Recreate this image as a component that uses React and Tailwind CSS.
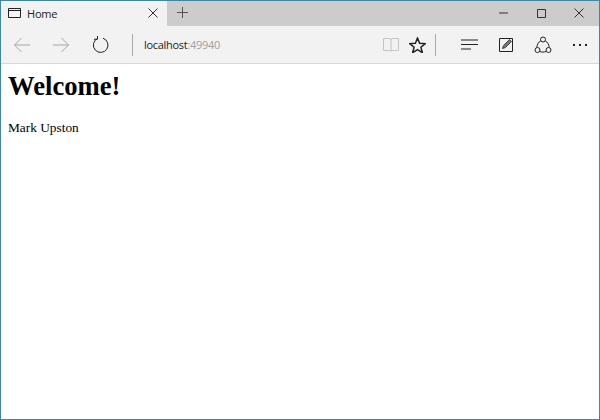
import React from "react";

// Browser chrome icons, drawn to match the Edge toolbar
const Stroke = ({ w = 24, h = 24, className = "", children }) => (
    <svg width={w} height={h} viewBox={`0 0 ${w} ${h}`} fill="none" stroke="currentColor" className={className}>
        {children}
    </svg>
);

const TitleBar = () => (
    <div className="flex h-[25px] items-stretch bg-[#cccccc]">
        <div className="flex w-[166px] items-center bg-[#f2f2f2] pl-[7px]">
            <Stroke w={13} h={10} className="mb-[1px] text-[#222222]">
                <path d="M.5.5h12v9H.5zM.5 2.5h12" />
            </Stroke>
            <span className="mt-[1px] ml-[6px] font-['Open_Sans',sans-serif] text-[11px] tracking-[-0.2px] text-[#222222]">
                Home
            </span>
            <Stroke w={10} h={10} className="mr-[9px] mb-[2px] ml-auto text-[#333333]">
                <path d="M.5.5l9 9M9.500.5l-9 9" />
            </Stroke>
        </div>
        <div className="flex w-[30px] items-center justify-center">
            <Stroke w={11} h={11} className="mb-[2px] text-[#555555]">
                <path d="M5.500 0v11M0 5.500h11" />
            </Stroke>
        </div>
        <div className="ml-auto flex items-center pr-[1px]">
            <div className="flex w-[38px] justify-center">
                <Stroke w={9} h={2} className="mb-[1px] text-[#333333]">
                    <path d="M0 1h9" />
                </Stroke>
            </div>
            <div className="flex w-[38px] justify-center">
                <Stroke w={9} h={9} className="mb-[1px] text-[#333333]">
                    <path d="M.5.500h8v8h-8z" />
                </Stroke>
            </div>
            <div className="flex w-[38px] justify-center">
                <Stroke w={10} h={10} className="mb-[1px] text-[#333333]">
                    <path d="M.5.500l9 9M9.500.500l-9 9" />
                </Stroke>
            </div>
        </div>
    </div>
);

const NavBar = () => (
    <div className="flex h-[38px] items-center border-b border-[#d9d9d9] bg-[#f2f2f2] text-[#222222]">
        <Stroke w={18} h={16} className="ml-[12px] text-[#a6a6a6]">
            <path d="M17 8H1.500M8.500 1 1.500 8l7 7" />
        </Stroke>
        <Stroke w={18} h={16} className="ml-[21px] text-[#a6a6a6]">
            <path d="M1 8h15.500M9.500 1l7 7-7 7" />
        </Stroke>
        <Stroke w={17} h={17} className="ml-[22px]">
            <path d="M5.400 2.600A7.300 7.300 0 1 0 11 2.200M5.500 0v3.200H2" />
        </Stroke>
        <div className="ml-[23px] h-[22px] w-px bg-[#a9a9a9]" />
        <div className="mt-[1px] ml-[11px] font-['Open_Sans',sans-serif] text-[11px] tracking-[-0.3px]">
            localhost<span className="text-[#a0a0a0]">:49940</span>
        </div>
        <Stroke w={16} h={15} className="ml-auto text-[#c4c4c4]">
            <path d="M.5 1.500h6c.8 0 1.500.5 1.500 1.500 0-1 .7-1.500 1.500-1.500h6v12h-6.500c-.5 0-1 .3-1 .8 0-.5-.5-.8-1-.8H.5zM8 3v11" />
        </Stroke>
        <Stroke w={17} h={16} className="ml-[10px]">
            <path d="M8.500 1l2.100 5.200 5.600.4-4.300 3.600 1.400 5.400-4.800-3-4.800 3 1.400-5.400L.8 6.600l5.600-.4z" strokeWidth="1.500" />
        </Stroke>
        <div className="ml-[9px] h-[22px] w-px bg-[#a9a9a9]" />
        <Stroke w={17} h={11} className="ml-[25px]">
            <path d="M0 1h17M0 5.500h17M0 10h10" />
        </Stroke>
        <Stroke w={15} h={15} className="ml-[21px]">
            <path d="M.5 1.500h13v13H.5z" />
            <path d="M3.500 11.500l1-3 6-6 2 2-6 6z" fill="#777777" stroke="#444444" />
        </Stroke>
        <Stroke w={18} h={18} className="ml-[20px]">
            <circle cx="9" cy="3.500" r="2.500" />
            <circle cx="3.500" cy="14" r="2.500" />
            <circle cx="14.500" cy="14" r="2.500" />
            <path d="M6.800 4.800C4.500 6 3 8.500 2.800 11.500M11.200 4.800c2.300 1.200 3.800 3.700 4 6.700M6 15.500c2 .8 4 .8 6 0" />
        </Stroke>
        <div className="mt-[1px] mr-[12px] ml-[21px] flex gap-[4px]">
            <div className="h-[2px] w-[2px] bg-[#222222]" />
            <div className="h-[2px] w-[2px] bg-[#222222]" />
            <div className="h-[2px] w-[2px] bg-[#222222]" />
        </div>
    </div>
);

const App = () => (
    <div className="flex h-[420px] w-[600px] flex-col overflow-hidden border border-[#3f87a6] bg-white font-['Liberation_Sans',sans-serif]">
        <TitleBar />
        <NavBar />
        <main className="px-[7px] font-['Liberation_Serif',serif] text-black">
            <h1 className="mt-[6px] text-[26.67px] leading-[32px] font-bold">Welcome!</h1>
            <p className="mt-[18px] text-[13.33px] leading-[16px]">Mark Upston</p>
        </main>
    </div>
);

export default App;
